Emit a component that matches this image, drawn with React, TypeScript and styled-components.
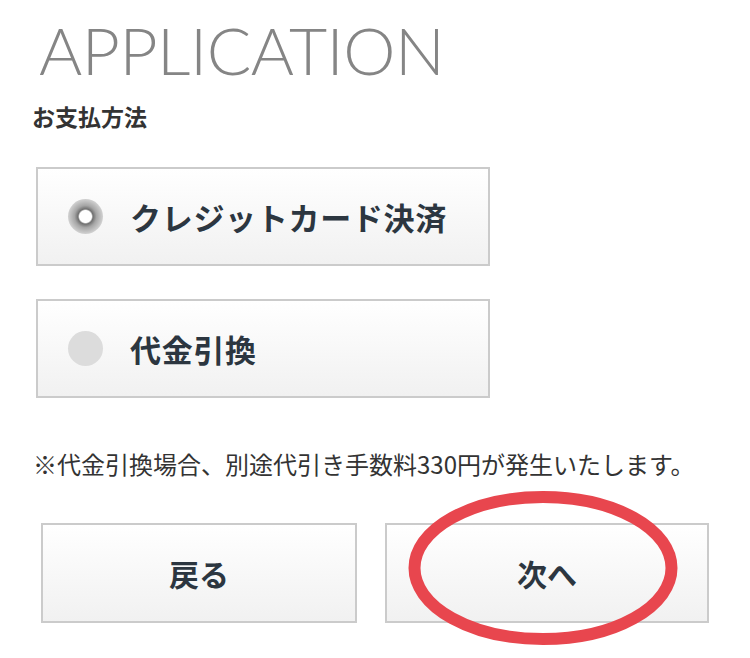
import React, { useState } from 'react';
import styled, { createGlobalStyle } from 'styled-components';

const Global = createGlobalStyle`
  body {
    margin: 0;
    background: #fff;
    font-family: "Noto Sans CJK JP", "Noto Sans", sans-serif;
  }
`;

const Page = styled.div`
  width: 750px;
  height: 658px;
  padding: 0 0 0 36px;
  box-sizing: border-box;
  overflow: hidden;
`;

const Title = styled.h1`
  margin: 0;
  padding: 10px 0 0 3px;
  height: 101px;
  box-sizing: border-box;
  font-family: Lato, "Liberation Sans", sans-serif;
  font-weight: 300;
  font-size: 66px;
  line-height: 80px;
  letter-spacing: -0.5px;
  color: #858585;
`;

const Label = styled.div`
  font-size: 23px;
  font-weight: 700;
  color: #333;
  line-height: 30px;
  margin: 0 0 36px -4px;
`;

const Options = styled.div`
  display: flex;
  flex-direction: column;
  gap: 33px;
  width: 454px;
`;

const Option = styled.label`
  display: flex;
  align-items: center;
  gap: 27px;
  height: 99px;
  box-sizing: border-box;
  padding-left: 30px;
  border: 2px solid #cbcbcb;
  background: linear-gradient(#fff, #f1f1f1);
  cursor: pointer;
`;

const Radio = styled.span<{ $checked: boolean }>`
  width: 35px;
  height: 35px;
  border-radius: 50%;
  flex-shrink: 0;
  background: ${({ $checked }) =>
    $checked
      ? 'radial-gradient(circle, #fff 0 6px, #6f6f6f 7.5px, #a5a5a5 11px, #d2d2d2 17.5px)'
      : '#dcdcdc'};
`;

const OptionText = styled.span`
  font-size: 31px;
  font-weight: 700;
  letter-spacing: 0.7px;
  color: #2c3640;
  line-height: 1;
`;

const Note = styled.p`
  margin: 49px 0 0 -3px;
  font-size: 24px;
  line-height: 34px;
  color: #333;
`;

const ButtonRow = styled.div`
  position: relative;
  display: flex;
  gap: 28px;
  margin: 42px 0 0 5px;
`;

const Button = styled.button<{ $width: number }>`
  width: ${({ $width }) => $width}px;
  height: 100px;
  border: 2px solid #cbcbcb;
  background: linear-gradient(#fff, #f1f1f1);
  font-family: "Noto Sans CJK JP", sans-serif;
  font-size: 30px;
  font-weight: 700;
  color: #2c3640;
  cursor: pointer;
`;

const Circle = styled.svg`
  position: absolute;
  left: 366px;
  top: -34px;
  pointer-events: none;
`;

export default function App() {
  const [method, setMethod] = useState('card');
  const options = [
    { id: 'card', label: 'クレジットカード決済' },
    { id: 'cod', label: '代金引換' },
  ];

  return (
    <Page>
      <Global />
      <Title>APPLICATION</Title>
      <Label>お支払方法</Label>
      <Options>
        {options.map((o) => (
          <Option key={o.id} onClick={() => setMethod(o.id)}>
            <Radio $checked={method === o.id} />
            <OptionText>{o.label}</OptionText>
          </Option>
        ))}
      </Options>
      <Note>※代金引換場合、別途代引き手数料330円が発生いたします。</Note>
      <ButtonRow>
        <Button $width={316}>戻る</Button>
        <Button $width={324}>次へ</Button>
        <Circle width="272" height="158" viewBox="0 0 272 158">
          <ellipse cx="136" cy="79" rx="128.5" ry="71" fill="none" stroke="#e8464e" strokeWidth="12" />
        </Circle>
      </ButtonRow>
    </Page>
  );
}
